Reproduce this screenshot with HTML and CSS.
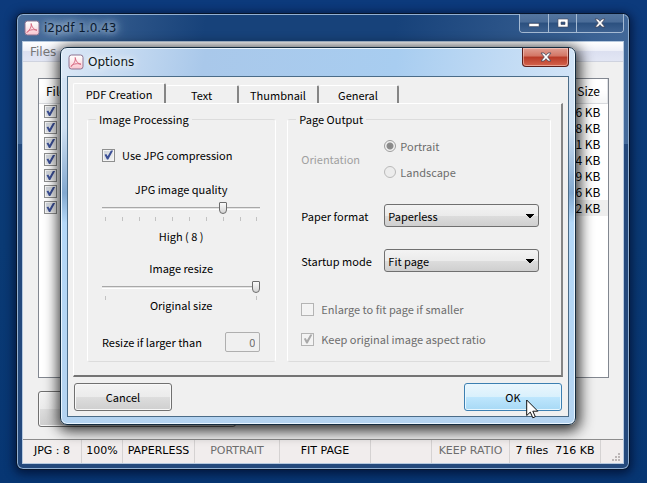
FILE: index.html
```
<!DOCTYPE html>
<html lang="en">
<head>
<meta charset="utf-8">
<title>i2pdf 1.0.43</title>
<link rel="stylesheet" href="styles.css">
</head>
<body>
<svg class="defs" aria-hidden="true">
  <defs>
    <linearGradient id="pink" x1="0" y1="0" x2="0" y2="1"><stop offset="0" stop-color="#fff"/><stop offset=".4" stop-color="#fdeef0"/><stop offset="1" stop-color="#f9c3cd"/></linearGradient>
    <symbol id="logo" viewBox="0 0 16 16">
      <rect x="1" y="1" width="14" height="14" rx="2.5" fill="url(#pink)" stroke="#8d7390"/>
      <path d="M7.200 3.500c.6 3.200-1.500 6.700-4.200 9 1-2.200 5.500-3.600 10-2.300-2.800-.2-5.300-3-5.800-6.700z" fill="#fbdde2" stroke="#d4607a" stroke-width=".9"/>
    </symbol>
    <symbol id="cross" viewBox="0 0 12 10">
      <path d="M1 1h3l2 2.300L8 1h3L7.700 5 11 9H8L6 6.700 4 9H1l3.300-4z" fill="#fff" stroke="#45475a" stroke-width=".8"/>
    </symbol>
  </defs>
</svg>
<main class="window">
  <header class="titlebar">
    <svg class="logo"><use href="#logo"/></svg>
    <h1 class="title title-main">i2pdf 1.0.43</h1>
    <div class="caption-buttons">
      <button type="button" aria-label="Minimize"><svg width="12" height="10"><rect x="1" y="5.500" width="10" height="3" fill="#fff" stroke="#45475a" stroke-width=".5"/></svg></button>
      <button type="button" aria-label="Maximize"><svg width="12" height="10"><path d="M1 1h10v8H1zM4 4v2.500h4V4z" fill="#fff" fill-rule="evenodd" stroke="#45475a" stroke-width=".6"/></svg></button>
      <button type="button" class="wide" aria-label="Close"><svg width="12" height="10"><use href="#cross"/></svg></button>
    </div>
  </header>
  <div class="client">
    <nav class="menubar"><a href="#files">Files</a></nav>
    <div class="content">
      <div class="list">
        <table>
          <thead><tr><th>File</th><th class="size">Size</th></tr></thead>
          <tbody>
            <tr><td><input type="checkbox" checked aria-label="File 1"></td><td class="size">6 KB</td></tr>
            <tr><td><input type="checkbox" checked aria-label="File 2"></td><td class="size">8 KB</td></tr>
            <tr><td><input type="checkbox" checked aria-label="File 3"></td><td class="size">1 KB</td></tr>
            <tr><td><input type="checkbox" checked aria-label="File 4"></td><td class="size">4 KB</td></tr>
            <tr><td><input type="checkbox" checked aria-label="File 5"></td><td class="size">9 KB</td></tr>
            <tr><td><input type="checkbox" checked aria-label="File 6"></td><td class="size">6 KB</td></tr>
            <tr><td><input type="checkbox" checked aria-label="File 7"></td><td class="size current">2 KB</td></tr>
          </tbody>
        </table>
      </div>
      <button type="button" class="button create" aria-label="Create"></button>
    </div>
    <footer class="statusbar">
      <span class="s-quality">JPG : 8</span><span class="s-scale">100%</span><span class="s-paper">PAPERLESS</span><span class="s-orient dim">PORTRAIT</span><span class="s-fit">FIT PAGE</span><span class="s-blank"></span><span class="s-ratio dim">KEEP RATIO</span><span class="s-total">7 files&nbsp; 716 KB</span>
      <svg class="grip" width="9" height="9"><path d="M6 0h2v2H6zM3 3h2v2H3zM6 3h2v2H6zM0 6h2v2H0zM3 6h2v2H3zM6 6h2v2H6z" fill="#bcb6b6"/></svg>
    </footer>
  </div>
</main>

<section class="dialog" role="dialog" aria-labelledby="dialog-title">
  <header class="titlebar dialog-titlebar">
    <svg class="logo"><use href="#logo"/></svg>
    <h2 class="title" id="dialog-title">Options</h2>
    <button type="button" class="close" aria-label="Close"><svg width="12" height="10"><use href="#cross"/></svg></button>
  </header>
  <form class="dialog-body">
    <div class="tabs" role="tablist">
      <button type="button" role="tab" class="tab selected" aria-selected="true">PDF Creation</button>
      <button type="button" role="tab" class="tab">Text</button>
      <button type="button" role="tab" class="tab">Thumbnail</button>
      <button type="button" role="tab" class="tab">General</button>
    </div>
    <div class="pane" role="tabpanel">
      <fieldset class="group group-image">
        <legend>Image Processing</legend>
        <div class="fields fields-image">
          <label class="row"><input type="checkbox" checked>Use JPG compression</label>
          <label class="row center quality-label" for="quality">JPG image quality</label>
          <input type="range" id="quality" min="1" max="10" value="8">
          <div class="ticks"><i></i><i></i><i></i><i></i><i></i><i></i><i></i><i></i><i></i><i></i></div>
          <output class="row center quality-value" for="quality">High ( 8 )</output>
          <label class="row center resize-label" for="resize">Image resize</label>
          <input type="range" id="resize" min="1" max="10" value="10">
          <div class="ticks"><i></i><i></i></div>
          <output class="row center resize-value" for="resize">Original size</output>
          <div class="row limit"><label for="limit">Resize if larger than</label><input type="text" id="limit" value="0" disabled></div>
        </div>
      </fieldset>
      <fieldset class="group group-page">
        <legend>Page Output</legend>
        <div class="fields fields-page">
          <div class="pair">
            <span class="pair-label faint" id="orientation">Orientation</span>
            <div class="radios" role="radiogroup" aria-labelledby="orientation">
              <label class="row dim"><input type="radio" name="orientation" checked disabled>Portrait</label>
              <label class="row dim"><input type="radio" name="orientation" disabled>Landscape</label>
            </div>
          </div>
          <div class="pair">
            <label class="pair-label" for="paper">Paper format</label>
            <select id="paper"><option>Paperless</option></select>
          </div>
          <div class="pair">
            <label class="pair-label" for="startup">Startup mode</label>
            <select id="startup"><option>Fit page</option></select>
          </div>
          <div class="checks">
            <label class="row dim"><input type="checkbox" disabled>Enlarge to fit page if smaller</label>
            <label class="row dim"><input type="checkbox" checked disabled>Keep original image aspect ratio</label>
          </div>
        </div>
      </fieldset>
    </div>
    <div class="actions">
      <button type="button" class="button">Cancel</button>
      <div class="ok-wrap">
        <button type="submit" class="button hot">OK</button>
        <svg class="cursor" width="13" height="20" viewBox="0 0 13 20"><path d="M.7 1v15.500l3.600-3.400 2.500 5.700 2.500-1.100-2.500-5.500h5z" fill="#fff" stroke="#111"/></svg>
      </div>
    </div>
  </form>
</section>
</body>
</html>
```
FILE: styles.css
```
* { box-sizing: border-box; }

:root {
  --ui: "Noto Sans CJK JP", "Noto Sans", sans-serif;
  --caption: "DejaVu Sans", sans-serif;
}

body {
  margin: 0;
  min-height: 100vh;
  padding: 13px 17px 13px 16px;
  display: flex;
  position: relative;
  overflow: hidden;
  background: linear-gradient(#0c3a7c, #0a3a74 50%, #073673);
  font: 11px/16px var(--ui);
  color: #000;
}

button, input, select { font: inherit; color: inherit; margin: 0; padding: 0; }
.defs { position: absolute; width: 0; height: 0; }
.logo { width: 16px; height: 16px; flex: none; }

/* Main window */
.window {
  flex: 1;
  display: flex;
  flex-direction: column;
  padding: 0 5px 5px;
  border: 1px solid #06152c;
  border-radius: 7px;
  background: linear-gradient(100deg, #4a6e9b, #17427a 30%, #17427a 60%, #456b9b) top / 100% 130px no-repeat, #24497c;
  box-shadow: inset 0 0 0 1px #92b0d2, 0 2px 10px 2px rgba(0, 10, 40, .7);
}
.titlebar { display: flex; align-items: center; height: 27px; padding-left: 2px; gap: 4px; }
.title { margin: 0; font: 12px/16px var(--caption); color: #101820; text-shadow: 0 0 6px #fff, 0 0 10px #fff; }
.title-main { color: #0b1b30; text-shadow: 0 0 5px #a8bdd5, 0 0 8px #a8bdd5, 0 0 12px #a8bdd5, 0 0 16px #a8bdd5; }
.caption-buttons {
  display: flex;
  align-self: flex-start;
  margin-left: auto;
  height: 19px;
  border: 1px solid #a5bad3;
  border-top: 0;
  border-radius: 0 0 4px 4px;
  overflow: hidden;
}
.caption-buttons button {
  width: 28px;
  border: 0;
  border-left: 1px solid #a5bad3;
  background: linear-gradient(#54769f, #4a6c98 45%, #2b507f 50%, #3d6190);
  display: grid;
  place-items: center;
}
.caption-buttons button:first-child { border-left: 0; }
.caption-buttons .wide { width: 47px; }

.client { flex: 1; display: flex; flex-direction: column; border: 1px solid #b6c9df; background: #f0f0f0; }
.menubar { height: 20px; padding: 0 7px; background: linear-gradient(#fff, #eef0f8 45%, #dce0f0 50%, #e2e6f4); border-bottom: 1px solid #cfd3df; }
.menubar a { font: 12px/20px var(--caption); color: #777; text-decoration: none; }
.content { flex: 1; display: flex; flex-direction: column; padding: 16px 14px 12px 15px; }
.list { flex: 1; background: #fff; border: 1px solid #828790; margin-bottom: 13px; font-size: 12px; }
.list table { width: 100%; border-collapse: collapse; }
.list th { height: 24px; padding: 0 7px; font-weight: normal; text-align: left; background: linear-gradient(#fff 50%, #f4f5f6); border-bottom: 1px solid #d8dade; border-right: 1px solid #e0e2e6; }
.list td { height: 16px; padding: 0 7px 0 5px; line-height: 16px; }
.list .size { text-align: right; }
.list td input { display: block; }
.current { background: #eee; }

.button {
  width: 98px;
  height: 28px;
  border: 1px solid #707070;
  border-radius: 3px;
  background: linear-gradient(#f3f3f3, #ebebeb 50%, #dddddd 51%, #cfcfcf);
  box-shadow: inset 0 0 0 1px #f8f8f8;
}
.create { width: 198px; height: 36px; }
.hot { border-color: #3c7fb1; background: linear-gradient(#eaf6fd, #d9f0fc 50%, #bee6fd 51%, #a7d9f5); box-shadow: inset 0 0 0 1px #e8f7ff; }

.statusbar { position: relative; display: flex; height: 24px; border-top: 1px solid #8c8c8c; background: #f1eded; font: 11px/22px var(--caption); padding-right: 22px; }
.statusbar span { border-right: 1px solid #d5d2d2; text-align: center; white-space: nowrap; }
.s-quality { width: 59px; }
.s-scale { width: 41px; }
.s-paper { width: 72px; }
.s-orient { width: 85px; }
.s-fit { width: 91px; }
.s-blank { flex: 1; }
.s-ratio { width: 78px; }
.s-total { width: 91px; }
.grip { position: absolute; right: 2px; bottom: 1px; }
.dim { color: #6d6d6d; }
.faint { color: #a0a0a0; }

/* Options dialog */
.dialog {
  position: absolute;
  top: 47px;
  left: 60px;
  right: 71px;
  padding: 0 6px 7px;
  border: 1px solid #142c40;
  border-radius: 7px;
  background: linear-gradient(100deg, #dce8f6, #a9c8ea 28%, #a8cdf0 65%, #d2e4f7) top / 100% 30px no-repeat, linear-gradient(#d5e5f6, #cfe0f2 80px, #82a8cf 145px, #b4d8f8 175px, #b4d3f0);
  box-shadow: inset 0 0 0 1px #e9f5ff, 1px 3px 14px 3px rgba(0, 0, 0, .8);
}
.dialog-titlebar { height: 28px; padding-left: 1px; }
.close {
  align-self: flex-start;
  margin-left: auto;
  width: 47px;
  height: 19px;
  border: 1px solid #5b1f1c;
  border-top: 0;
  border-radius: 0 0 4px 4px;
  background: linear-gradient(#e0a094, #d37564 45%, #b83a27 50%, #d4644e);
  box-shadow: inset 0 0 0 1px rgba(255, 220, 210, .5);
  display: grid;
  place-items: center;
}
.dialog-body { padding: 6px 5px 5px; border: 1px solid #4b6c88; background: #f0f0f0; }

.tabs { display: flex; align-items: flex-end; height: 20px; }
.tab {
  width: 80px;
  height: 18px;
  border: 0;
  border-top: 1px solid #fff;
  border-right: 2px solid #858585;
  border-radius: 2px 2px 0 0;
  background: none;
  line-height: 16px;
}
.tab.selected { width: 93px; height: 20px; border-left: 1px solid #fff; }
.tab.selected + .tab { width: 73px; }
.pane {
  display: flex;
  gap: 11px;
  padding: 8px 10px 13px 13px;
  border: 1px solid #fff;
  border-right: 2px solid #858585;
  border-bottom: 2px solid #747474;
}
.group { min-width: 0; margin: 0; padding: 0 0 9px; border: 1px solid; border-color: #dcdcdc #fff #dcdcdc #fff; border-radius: 3px; }
.group-image { flex: 189; }
.group-page { flex: 264; }
.group legend { height: 14px; line-height: 14px; margin-left: 8px; padding: 0 3px; }
.fields { display: flex; flex-direction: column; }
.fields-image { padding: 19px 15px 0 14px; }
.fields-page { padding: 10px 11px 0 13px; gap: 22px; }
.row { display: flex; align-items: center; height: 20px; gap: 7px; white-space: nowrap; }
.center { justify-content: center; }
.quality-label { margin-top: 14px; }
.quality-value { margin-top: 5px; }
.resize-label { margin-top: 12px; }
.resize-value { margin-top: -5px; }
.limit { margin-top: 17px; justify-content: space-between; }
.limit input {
  width: 35px;
  height: 20px;
  padding: 0 4px;
  border: 1px solid #afafaf;
  border-radius: 2px;
  background: #f0f0f0;
  text-align: right;
  color: #6d6d6d;
}

.ticks { display: flex; justify-content: space-between; height: 4px; padding: 0 3px; }
.ticks i { width: 1px; background: #c2c2c2; }

input[type="range"] {
  appearance: none;
  width: 100%;
  height: 18px;
  background: linear-gradient(#a8a8a8 1px, #e4e4e4 1px, #e4e4e4 2px, #fff 2px) center / 100% 3px no-repeat;
}
input[type="range"]::-webkit-slider-thumb {
  appearance: none;
  width: 8px;
  height: 12px;
  border: 1px solid #6c6c6c;
  border-radius: 1px 1px 4px 4px;
  background: linear-gradient(#fafafa, #d4d4d4);
}

input[type="checkbox"] {
  appearance: none;
  flex: none;
  width: 13px;
  height: 13px;
  border: 1px solid #8e8f8f;
  background: linear-gradient(135deg, #c9cfd6, #f6f6f6);
  box-shadow: inset 0 0 0 1px #f4f4f4;
}
input[type="checkbox"]:checked::before {
  content: "";
  display: block;
  width: 11px;
  height: 11px;
  background: #3b4f96;
  clip-path: polygon(14% 48%, 30% 40%, 42% 62%, 72% 8%, 92% 8%, 48% 92%, 36% 92%);
}
input[type="checkbox"]:disabled { border-color: #b4b4b4; background: #f3f3f3; }
input[type="checkbox"]:disabled::before { background: #a9a9a9; }

input[type="radio"] {
  appearance: none;
  flex: none;
  width: 12px;
  height: 12px;
  border: 1px solid #b9b9b9;
  border-radius: 50%;
  background: #ececec;
}
input[type="radio"]:checked { border-color: #9d9d9d; background: radial-gradient(circle, #858585 0, #8d8d8d 3px, #f2f2f2 4px); }

.pair { display: flex; align-items: center; }
.pair-label { width: 83px; flex: none; }
.radios { display: grid; gap: 6px; }
.radios .row { gap: 4px; }
.checks { display: grid; gap: 10px; margin-top: 5px; }

select {
  appearance: none;
  flex: 1;
  min-width: 0;
  height: 23px;
  padding: 0 3px;
  border: 1px solid #707070;
  border-radius: 3px;
  background:
    linear-gradient(to bottom right, #000 50%, transparent 51%) right 4px center / 4px 4px no-repeat,
    linear-gradient(to bottom left, #000 50%, transparent 51%) right 8px center / 4px 4px no-repeat,
    linear-gradient(#f3f3f3, #ebebeb 50%, #dddddd 51%, #cfcfcf);
}

.actions { display: flex; justify-content: space-between; margin-top: 6px; padding: 0 1px; }
.ok-wrap { position: relative; display: flex; }
.cursor { position: absolute; left: 62px; top: 16px; }
```
